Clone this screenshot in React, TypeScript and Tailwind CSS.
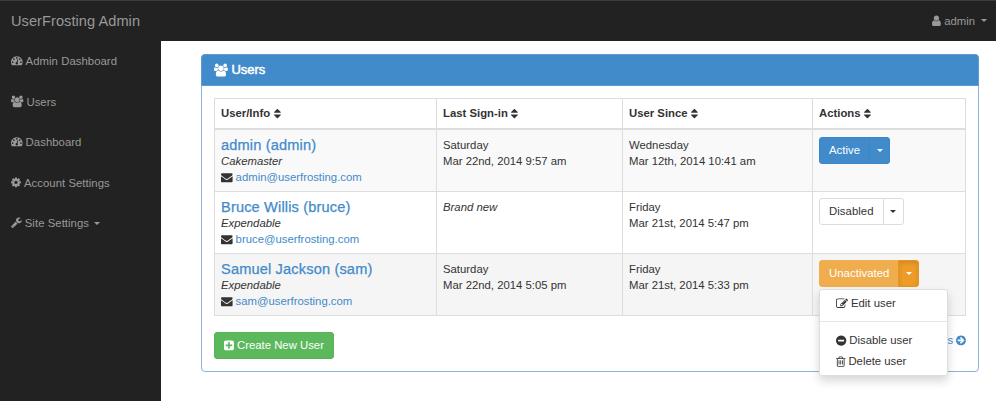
import type { ReactNode } from "react";

type Glyph = { w: number; x: number; d: string };

const glyphs = {
  dashboard: { w: 1792, x: 0, d: "M384 1152q0-53-37.5-90.5t-90.5-37.5-90.5 37.5-37.5 90.5 37.5 90.5 90.5 37.5 90.5-37.5 37.5-90.5zm192-448q0-53-37.5-90.5t-90.5-37.5-90.5 37.5-37.5 90.5 37.5 90.5 90.5 37.5 90.5-37.5 37.5-90.5zm428 481l101-382q6-26-7.5-48.5t-38.5-29.5-48 6.5-30 39.5l-101 382q-60 5-107 43.5t-63 98.5q-20 77 20 146t117 89 146-20 89-117q16-60-6-117t-72-91zm660-33q0-53-37.5-90.5t-90.5-37.5-90.5 37.5-37.5 90.5 37.5 90.5 90.5 37.5 90.5-37.5 37.5-90.5zm-640-640q0-53-37.5-90.5t-90.5-37.5-90.5 37.5-37.5 90.5 37.5 90.5 90.5 37.5 90.5-37.5 37.5-90.5zm448 192q0-53-37.5-90.5t-90.5-37.5-90.5 37.5-37.5 90.5 37.5 90.5 90.5 37.5 90.5-37.5 37.5-90.5zm320 448q0 261-141 483-19 29-54 29h-1402q-35 0-54-29-141-221-141-483 0-182 71-348t191-286 286-191 348-71 348 71 286 191 191 286 71 348z" },
  users: { w: 1920, x: 0, d: "M593 896q-162 5-265 128h-134q-82 0-138-40.5t-56-118.5q0-353 124-353 6 0 43.5 21t97.5 42.5 119 21.5q67 0 133-23-5 37-5 66 0 139 81 256zm1071 637q0 120-73 189.5t-194 69.5h-874q-121 0-194-69.5t-73-189.5q0-53 3.5-103.5t14-109 26.5-108.5 43-97.5 62-81 85.5-53.5 111.5-20q10 0 43 21.5t73 48 107 48 135 21.5 135-21.5 107-48 73-48 43-21.5q61 0 111.5 20t85.5 53.5 62 81 43 97.5 26.5 108.5 14 109 3.5 103.5zm-1024-1277q0 106-75 181t-181 75-181-75-75-181 75-181 181-75 181 75 75 181zm704 384q0 159-112.5 271.5t-271.5 112.5-271.5-112.5-112.5-271.5 112.5-271.5 271.5-112.5 271.5 112.5 112.5 271.5zm576 225q0 78-56 118.5t-138 40.5h-134q-103-123-265-128 81-117 81-256 0-29-5-66 66 23 133 23 59 0 119-21.5t97.5-42.5 43.5-21q124 0 124 353zm-128-609q0 106-75 181t-181 75-181-75-75-181 75-181 181-75 181 75 75 181z" },
  cog: { w: 1536, x: 128, d: "M1152 896q0-106-75-181t-181-75-181 75-75 181 75 181 181 75 181-75 75-181zm512-109v222q0 12-8 23t-20 13l-185 28q-19 54-39 91 35 50 107 138 10 12 10 25t-9 23q-27 37-99 108t-94 71q-12 0-26-9l-138-108q-44 23-91 38-16 136-29 186-7 28-36 28h-222q-14 0-24.5-8.5t-11.5-21.5l-28-184q-49-16-90-37l-141 107q-10 9-25 9-14 0-25-11-126-114-165-168-7-10-7-23 0-12 8-23 15-21 51-66.5t54-70.5q-27-50-41-99l-183-27q-13-2-21-12.5t-8-23.5v-222q0-12 8-23t19-13l186-28q14-46 39-92-40-57-107-138-10-12-10-24 0-10 9-23 26-36 98.5-107.5t94.5-71.5q13 0 26 10l138 107q44-23 91-38 16-136 29-186 7-28 36-28h222q14 0 24.5 8.5t11.5 21.5l28 184q49 16 90 37l142-107q9-9 24-9 13 0 25 10 129 119 165 170 7 8 7 22 0 12-8 23-15 21-51 66.5t-54 70.5q26 50 41 98l183 28q13 2 21 12.5t8 23.5z" },
  wrench: { w: 1664, x: 64, d: "M448 1472q0-26-19-45t-45-19-45 19-19 45 19 45 45 19 45-19 19-45zm644-420l-682 682q-37 37-90 37-52 0-91-37l-106-108q-38-36-38-90 0-53 38-91l681-681q39 98 114.5 173.5t173.5 114.5zm634-435q0 39-23 106-47 134-164.5 217.5t-258.5 83.5q-185 0-316.5-131.5t-131.5-316.5 131.5-316.5 316.5-131.5q58 0 121.5 16.5t107.5 46.5q16 11 16 28t-16 28l-293 169v224l193 107q5-3 79-48.5t135.5-81 70.5-35.5q15 0 23.5 10t8.5 25z" },
  user: { w: 1280, x: 256, d: "M1536 1399q0 109-62.5 187t-150.5 78h-854q-88 0-150.5-78t-62.5-187q0-85 8.5-160.5t31.5-152 58.5-131 94-89 134.5-34.5q131 128 313 128t313-128q76 0 134.5 34.5t94 89 58.5 131 31.5 152 8.5 160.5zm-256-887q0 159-112.5 271.5t-271.5 112.5-271.5-112.5-112.5-271.5 112.5-271.5 271.5-112.5 271.5 112.5 112.5 271.5z" },
  envelope: { w: 1792, x: 0, d: "M1792 710v794q0 66-47 113t-113 47h-1472q-66 0-113-47t-47-113v-794q44 49 101 87 362 246 497 345 57 42 92.5 65.5t94.5 48 110 24.5h2q51 0 110-24.5t94.5-48 92.5-65.5q170-123 498-345 57-39 100-87zm0-294q0 79-49 151t-122 123q-376 261-468 325-10 7-42.5 31t-54 38.5-52 32.5-57.5 27-50 9h-2q-23 0-50-9t-57.5-27-52-32.5-54-38.5-42.5-31q-91-64-262-182.5t-205-142.5q-62-42-117-115.5t-55-136.5q0-78 41.5-130t118.5-52h1472q65 0 112.5 47t47.5 113z" },
  plus: { w: 1536, x: 128, d: "M1408 960v-128q0-26-19-45t-45-19h-320v-320q0-26-19-45t-45-19h-128q-26 0-45 19t-19 45v320h-320q-26 0-45 19t-19 45v128q0 26 19 45t45 19h320v320q0 26 19 45t45 19h128q26 0 45-19t19-45v-320h320q26 0 45-19t19-45zm256-544v960q0 119-84.5 203.5t-203.5 84.5h-960q-119 0-203.5-84.5t-84.5-203.5v-960q0-119 84.5-203.5t203.5-84.5h960q119 0 203.5 84.5t84.5 203.5z" },
  edit: { w: 1792, x: 0, d: "M888 1184l116-116-152-152-116 116v56h96v96h56zm440-720q-16-16-33 1l-350 350q-17 17-1 33t33-1l350-350q17-17 1-33zm80 594v190q0 119-84.5 203.5t-203.5 84.5h-832q-119 0-203.5-84.5t-84.5-203.5v-832q0-119 84.5-203.5t203.5-84.5h832q63 0 117 25 15 7 18 23 3 17-9 29l-49 49q-14 14-32 8-23-6-45-6h-832q-66 0-113 47t-47 113v832q0 66 47 113t113 47h832q66 0 113-47t47-113v-126q0-13 9-22l64-64q15-15 35-7t20 29zm-96-738l288 288-672 672h-288v-288zm444 132l-92 92-288-288 92-92q28-28 68-28t68 28l152 152q28 28 28 68t-28 68z" },
  minus: { w: 1536, x: 128, d: "M1344 960v-128q0-26-19-45t-45-19h-768q-26 0-45 19t-19 45v128q0 26 19 45t45 19h768q26 0 45-19t19-45zm320-64q0 209-103 385.5t-279.5 279.5-385.5 103-385.5-103-279.5-279.5-103-385.5 103-385.5 279.5-279.5 385.5-103 385.5 103 279.5 279.5 103 385.5z" },
  trash: { w: 1408, x: 192, d: "M704 736v576q0 14-9 23t-23 9h-64q-14 0-23-9t-9-23v-576q0-14 9-23t23-9h64q14 0 23 9t9 23zm256 0v576q0 14-9 23t-23 9h-64q-14 0-23-9t-9-23v-576q0-14 9-23t23-9h64q14 0 23 9t9 23zm256 0v576q0 14-9 23t-23 9h-64q-14 0-23-9t-9-23v-576q0-14 9-23t23-9h64q14 0 23 9t9 23zm128 724v-948h-896v948q0 22 7 40.5t14.5 27 10.5 8.5h832q3 0 10.5-8.5t14.5-27 7-40.5zm-672-1076h448l-48-117q-7-9-17-11h-317q-10 2-17 11zm928 32v64q0 14-9 23t-23 9h-96v948q0 83-47 143.5t-113 60.5h-832q-66 0-113-58.5t-47-141.5v-952h-96q-14 0-23-9t-9-23v-64q0-14 9-23t23-9h309l70-167q15-37 54-63t79-26h320q40 0 79 26t54 63l70 167h309q14 0 23 9t9 23z" },
  arrow: { w: 1536, x: 128, d: "M1413 896q0-27-18-45l-91-91-362-362q-18-18-45-18t-45 18l-91 91q-18 18-18 45t18 45l189 189h-502q-26 0-45 19t-19 45v128q0 26 19 45t45 19h502l-189 189q-19 19-19 45t19 45l91 91q18 18 45 18t45-18l362-362 91-91q18-18 18-45zm251 0q0 209-103 385.5t-279.5 279.5-385.5 103-385.5-103-279.5-279.5-103-385.5 103-385.5 279.5-279.5 385.5-103 385.5 103 279.5 279.5 103 385.5z" },
  sort: { w: 1024, x: 384, d: "M1408 1088q0 26-19 45l-448 448q-19 19-45 19t-45-19l-448-448q-19-19-19-45t19-45 45-19h896q26 0 45 19t19 45zm0-384q0 26-19 45t-45 19h-896q-26 0-45-19t-19-45 19-45l448-448q19-19 45-19t45 19l448 448q19 19 19 45z" },
} satisfies Record<string, Glyph>;

function Icon({ name, className = "h-[11.6px]" }: { name: keyof typeof glyphs; className?: string }) {
  const g = glyphs[name];
  return (
    <svg viewBox={`${g.x} 0 ${g.w} 1792`} className={`${className} w-auto shrink-0 -translate-y-[0.4px] overflow-visible`} fill="currentColor" aria-hidden="true">
      <path d={g.d} />
    </svg>
  );
}

function Caret() {
  return <span className="h-0 w-0 border-x-[3.2px] border-t-[3.2px] border-x-transparent border-t-current" />;
}

function NavItem({ icon, label, caret }: { icon: keyof typeof glyphs; label: string; caret?: boolean }) {
  return (
    <a className="flex h-[40.5px] items-center gap-[3px] pl-[11px] tracking-[0.05px]">
      <Icon name={icon} />
      <span>{label}</span>
      {caret && <span className="ml-0.5 flex"><Caret /></span>}
    </a>
  );
}

function HeadCell({ label }: { label: string }) {
  return (
    <div className="flex items-center gap-[3.5px] border-r border-[#ddd] pl-[6px] font-bold">
      <span>{label}</span>
      <Icon name="sort" className="h-[12px]" />
    </div>
  );
}

function Cell({ children, className = "pt-[7px]" }: { children?: ReactNode; className?: string }) {
  return <div className={`border-r border-[#ddd] pl-[6px] ${className}`}>{children}</div>;
}

function SplitButton({ label, main, toggle, children }: { label: string; main: string; toggle: string; children?: ReactNode }) {
  return (
    <div className="relative flex h-[27px] w-fit">
      <button className={`flex items-center rounded-l-[3px] border px-[9px] tracking-[0.06px] ${main}`}>{label}</button>
      <button className={`-ml-px flex w-[21px] items-center justify-center rounded-r-[3px] border ${toggle}`}>
        <Caret />
      </button>
      {children}
    </div>
  );
}

function MenuItem({ icon, label }: { icon: keyof typeof glyphs; label: string }) {
  return (
    <a className="flex h-[21px] items-center gap-[3.5px] pl-[15.5px]">
      <Icon name={icon} className="h-[12px]" />
      <span>{label}</span>
    </a>
  );
}

type Row = {
  name: string;
  title: string;
  email: string;
  signIn?: [string, string];
  since: [string, string];
  bg: string;
  actionPad: string;
  action: ReactNode;
};

const rows: Row[] = [
  {
    name: "admin (admin)",
    title: "Cakemaster",
    email: "admin@userfrosting.com",
    signIn: ["Saturday", "Mar 22nd, 2014 9:57 am"],
    since: ["Wednesday", "Mar 12th, 2014 10:41 am"],
    bg: "bg-[#f9f9f9]",
    actionPad: "pt-[7px]",
    action: (
      <SplitButton label="Active" main="border-[#3d86c6] bg-[#428bca] text-white" toggle="border-[#3d86c6] bg-[#428bca] text-white" />
    ),
  },
  {
    name: "Bruce Willis (bruce)",
    title: "Expendable",
    email: "bruce@userfrosting.com",
    since: ["Friday", "Mar 21st, 2014 5:47 pm"],
    bg: "bg-white",
    actionPad: "pt-[6px]",
    action: (
      <SplitButton label="Disabled" main="border-[#dcdcdc] bg-white text-[#333]" toggle="border-[#dcdcdc] bg-white text-[#333]" />
    ),
  },
  {
    name: "Samuel Jackson (sam)",
    title: "Expendable",
    email: "sam@userfrosting.com",
    signIn: ["Saturday", "Mar 22nd, 2014 5:05 pm"],
    since: ["Friday", "Mar 21st, 2014 5:33 pm"],
    bg: "bg-[#f5f5f5]",
    actionPad: "pt-[6px]",
    action: (
      <SplitButton
        label="Unactivated"
        main="border-[#f0ad4e] bg-[#f0ad4e] text-white"
        toggle="border-[#e5971f] bg-[#ed9c28] text-white shadow-[inset_0_2px_4px_rgba(0,0,0,0.125)]"
      >
        <div className="absolute top-[29px] left-0 z-10 h-[87px] w-[129px] rounded-[3px] border border-[#dedede] bg-white pt-[3px] text-[#333] shadow-[0_5px_10px_rgba(0,0,0,0.16)]">
          <MenuItem icon="edit" label="Edit user" />
          <div className="mt-[7px] mb-[8px] h-px bg-[#e5e5e5]" />
          <MenuItem icon="minus" label="Disable user" />
          <MenuItem icon="trash" label="Delete user" />
        </div>
      </SplitButton>
    ),
  },
];

const columns = "grid grid-cols-[222px_186px_190px_153px]";

export default function App() {
  return (
    <div className="h-[401px] w-[996px] overflow-hidden bg-white font-['Liberation_Sans',Arial,sans-serif] text-[11.34px] leading-[16.2px] text-[#333]">
      <header className="flex h-[41px] items-center justify-between border-t border-[#3c3c3c] bg-[#222] pr-[9px] pl-[11px] text-[#999]">
        <span className="text-[14.58px] tracking-[0.06px]">UserFrosting Admin</span>
        <a className="flex items-center gap-[3px]">
          <Icon name="user" className="h-[12.4px]" />
          <span>admin</span>
          <span className="ml-[3px] flex"><Caret /></span>
        </a>
      </header>
      <div className="flex h-[360px]">
        <nav className="w-[161px] shrink-0 bg-[#222] text-[#999]">
          <NavItem icon="dashboard" label="Admin Dashboard" />
          <NavItem icon="users" label="Users" />
          <NavItem icon="dashboard" label="Dashboard" />
          <NavItem icon="cog" label="Account Settings" />
          <NavItem icon="wrench" label="Site Settings" caret />
        </nav>
        <main className="pt-[13px] pl-[40px]">
          <section className="h-[318px] w-[778px] rounded-[4px] border border-[#86b4de] bg-white">
            <h3 className="-mx-px -mt-px flex h-[32px] items-center gap-[3.5px] rounded-t-[4px] border border-[#5c9bd1] bg-[#428bca] pl-[12px] text-[12.96px] text-white">
              <Icon name="users" className="h-[12.96px]" />
              <span className="[-webkit-text-stroke:0.5px_#fff]">Users</span>
            </h3>
            <div className="px-[12px] pt-[12px]">
              <div className="w-[752px] border-t border-l border-[#ddd]">
                <div className={`${columns} h-[31px] border-b-2 border-[#ddd]`}>
                  <HeadCell label="User/Info" />
                  <HeadCell label="Last Sign-in" />
                  <HeadCell label="User Since" />
                  <HeadCell label="Actions" />
                </div>
                {rows.map((row) => (
                  <div key={row.name} className={`${columns} h-[62px] border-b border-[#ddd] ${row.bg}`}>
                    <Cell>
                      <h4 className="text-[14.58px] leading-[16px] tracking-[0.16px] text-[#428bca] [-webkit-text-stroke:0.25px_#428bca]">{row.name}</h4>
                      <p className="italic">{row.title}</p>
                      <p className="flex items-center gap-[3px]">
                        <Icon name="envelope" />
                        <a className="text-[#428bca]">{row.email}</a>
                      </p>
                    </Cell>
                    <Cell>
                      {row.signIn ? (
                        <>
                          <p>{row.signIn[0]}</p>
                          <p>{row.signIn[1]}</p>
                        </>
                      ) : (
                        <p className="italic">Brand new</p>
                      )}
                    </Cell>
                    <Cell>
                      <p>{row.since[0]}</p>
                      <p>{row.since[1]}</p>
                    </Cell>
                    <Cell className={row.actionPad}>{row.action}</Cell>
                  </div>
                ))}
              </div>
              <div className="mt-[16px] flex justify-between">
                <button className="flex h-[27px] w-[120px] items-center justify-center gap-[3px] rounded-[3px] border border-[#56b356] bg-[#5cb85c] text-white">
                  <Icon name="plus" />
                  <span>Create New User</span>
                </button>
                <a className="flex h-[17px] items-center gap-[3px] text-[#428bca]">
                  <span>s</span>
                  <Icon name="arrow" />
                </a>
              </div>
            </div>
          </section>
        </main>
      </div>
    </div>
  );
}
